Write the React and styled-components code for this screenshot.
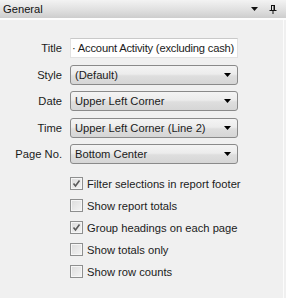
import React from "react";
import styled, {createGlobalStyle} from "styled-components";

const GlobalStyle = createGlobalStyle`
    html, body {
        margin: 0;
        padding: 0;
        background: #f0f0f0;
    }
    body {
        font-family: "Liberation Sans", Arial, sans-serif;
        font-size: 11.2px;
        color: #1b1b1b;
    }
`;

const fields = [
    {label: "Title", value: "· Account Activity (excluding cash)", text: true},
    {label: "Style", value: "(Default)"},
    {label: "Date", value: "Upper Left Corner"},
    {label: "Time", value: "Upper Left Corner (Line 2)"},
    {label: "Page No.", value: "Bottom Center"},
];

const options = [
    {label: "Filter selections in report footer", checked: true},
    {label: "Show report totals", checked: false},
    {label: "Group headings on each page", checked: true},
    {label: "Show totals only", checked: false},
    {label: "Show row counts", checked: false},
];

function Checkbox({checked}) {
    return (
        <CheckBox>
            {checked && (
                <svg width="9" height="9" viewBox="0 0 9 9">
                    <path d="M1.5 4.5 L3.5 7 L7.5 1.5" fill="none" stroke="#5a5a5a" strokeWidth="1.6" />
                </svg>
            )}
        </CheckBox>
    );
}

function App() {
    return (
        <PanelStyled>
            <GlobalStyle />
            <Header>
                <span>General</span>
                <div className="tools">
                    <svg width="8" height="5" viewBox="0 0 8 5">
                        <path d="M0 0 H7 L3.5 4 Z" fill="#111" />
                    </svg>
                    <svg width="8" height="9" viewBox="0 0 8 9">
                        <path d="M2 0.5 H6 M2.5 0.5 V5 M5.5 0.5 V5 M0.5 5.5 H7.5 M4 5.5 V9" fill="none" stroke="#111" strokeWidth="1" />
                        <rect x="4.5" y="1" width="1" height="4" fill="#111" />
                    </svg>
                </div>
            </Header>
            <Body>
                <FieldGrid>
                    {fields.map((f) => (
                        <React.Fragment key={f.label}>
                            <Label>{f.label}</Label>
                            {f.text ? (
                                <TextBox>{f.value}</TextBox>
                            ) : (
                                <Select>
                                    <span>{f.value}</span>
                                    <svg width="7" height="4" viewBox="0 0 7 4">
                                        <path d="M0 0 H7 L3.5 4 Z" fill="#000" />
                                    </svg>
                                </Select>
                            )}
                        </React.Fragment>
                    ))}
                </FieldGrid>
                <Options>
                    {options.map((o) => (
                        <OptionRow key={o.label}>
                            <Checkbox checked={o.checked} />
                            <span>{o.label}</span>
                        </OptionRow>
                    ))}
                </Options>
            </Body>
        </PanelStyled>
    );
}

const PanelStyled = styled.div`
    width: 286px;
    height: 298px;
    display: flex;
    flex-direction: column;
    background: #f0f0f0;
    overflow: hidden;
`;

const Header = styled.div`
    height: 18px;
    display: flex;
    align-items: center;
    justify-content: space-between;
    padding: 0 9px 0 3px;
    background: linear-gradient(to bottom, #f3f3f3 0%, #dedede 60%, #cdcdcd 100%);
    border-bottom: 2px solid #fdfdfd;
    color: #111;
    font-size: 11.2px;
    .tools{
        display: flex;
        align-items: center;
        gap: 10px;
    }
`;

const Body = styled.div`
    flex: 1;
    padding: 18px 0 0 0;
    margin-right: 2px;
    border-right: 1px solid #fcfcfc;
`;

const FieldGrid = styled.div`
    display: grid;
    grid-template-columns: 62px 168px;
    column-gap: 8px;
    row-gap: 6.5px;
    align-items: center;
`;

const Label = styled.div`
    text-align: right;
`;

const TextBox = styled.div`
    height: 20px;
    box-sizing: border-box;
    background: #fff;
    border: 1px solid #e2e2e2;
    border-top-color: #c9c9c9;
    padding: 0 1px;
    display: flex;
    align-items: center;
    white-space: nowrap;
    overflow: hidden;
    letter-spacing: -0.2px;
`;

const Select = styled.div`
    height: 20px;
    box-sizing: border-box;
    border: 1px solid #8a8a8a;
    border-radius: 3px;
    background: linear-gradient(to bottom, #f4f4f4 0%, #ececec 45%, #dedede 55%, #d6d6d6 100%);
    display: flex;
    align-items: center;
    justify-content: space-between;
    padding: 0 6px 0 4px;
    span{
        white-space: nowrap;
    }
`;

const Options = styled.div`
    display: flex;
    flex-direction: column;
    gap: 9px;
    padding: 13px 0 0 70px;
`;

const OptionRow = styled.div`
    display: flex;
    align-items: center;
    gap: 4px;
    height: 13px;
`;

const CheckBox = styled.div`
    width: 13px;
    height: 13px;
    box-sizing: border-box;
    border: 1px solid #8e8f8f;
    background: linear-gradient(135deg, #dcdcdc 0%, #f4f4f4 100%);
    box-shadow: inset 0 0 0 1px #f6f6f6;
    display: flex;
    align-items: center;
    justify-content: center;
`;

export default App;
